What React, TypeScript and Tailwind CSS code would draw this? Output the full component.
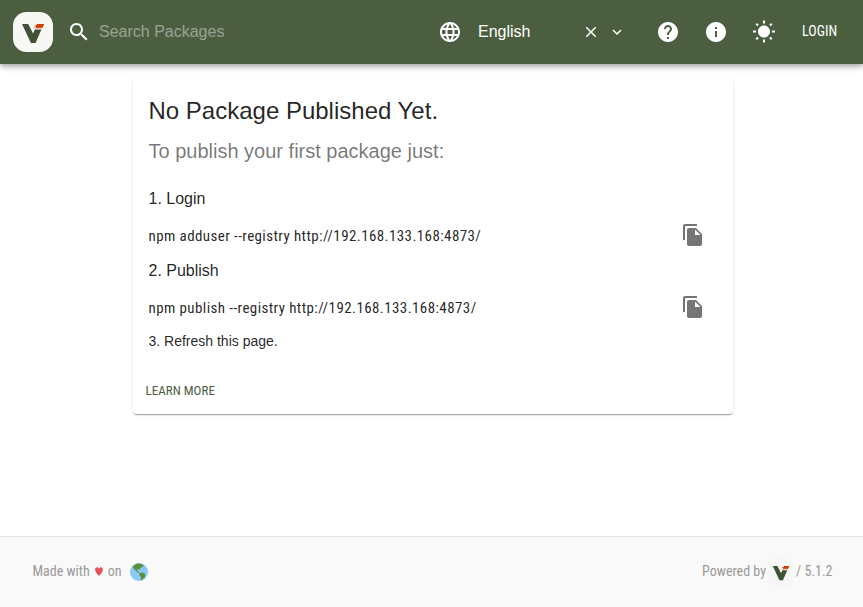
import React from 'react';

const sans = "font-['Liberation_Sans',Arial,sans-serif]";
const cond = "font-['Roboto_Condensed',Roboto,sans-serif] [font-stretch:75%]";

function Icon({ d, className = 'size-6' }: { d: string; className?: string }) {
  return (
    <svg viewBox="0 0 24 24" fill="currentColor" className={`shrink-0 ${className}`}>
      <path d={d} />
    </svg>
  );
}

const paths = {
  search:
    'M15.5 14h-.79l-.28-.27C15.41 12.59 16 11.11 16 9.5 16 5.91 13.09 3 9.5 3S3 5.91 3 9.5 5.91 16 9.5 16c1.61 0 3.09-.59 4.23-1.57l.27.28v.79l5 4.99L20.49 19l-4.99-5zm-6 0C7.01 14 5 11.99 5 9.5S7.01 5 9.5 5 14 7.01 14 9.5 11.99 14 9.5 14z',
  language:
    'M11.99 2C6.47 2 2 6.48 2 12s4.47 10 9.99 10C17.52 22 22 17.52 22 12S17.52 2 11.99 2zm6.93 6h-2.95c-.32-1.25-.78-2.45-1.38-3.56 1.84.63 3.37 1.91 4.33 3.56zM12 4.04c.83 1.2 1.48 2.53 1.91 3.96h-3.82c.43-1.43 1.08-2.76 1.91-3.96zM4.26 14C4.1 13.36 4 12.69 4 12s.1-1.36.26-2h3.38c-.08.66-.14 1.32-.14 2s.06 1.34.14 2H4.26zm.82 2h2.95c.32 1.25.78 2.45 1.38 3.56-1.84-.63-3.37-1.9-4.33-3.56zm2.95-8H5.08c.96-1.66 2.49-2.93 4.33-3.56C8.81 5.55 8.35 6.75 8.03 8zM12 19.96c-.83-1.2-1.48-2.53-1.91-3.96h3.82c-.43 1.43-1.08 2.76-1.91 3.96zM14.34 14H9.66c-.09-.66-.16-1.32-.16-2s.07-1.35.16-2h4.68c.09.65.16 1.32.16 2s-.07 1.34-.16 2zm.25 5.56c.6-1.11 1.06-2.31 1.38-3.56h2.95c-.96 1.65-2.49 2.93-4.33 3.56zM16.36 14c.08-.66.14-1.32.14-2s-.06-1.34-.14-2h3.38c.16.64.26 1.31.26 2s-.1 1.36-.26 2h-3.38z',
  close:
    'M19 6.41 17.59 5 12 10.59 6.41 5 5 6.41 10.59 12 5 17.59 6.41 19 12 13.41 17.59 19 19 17.59 13.41 12z',
  chevron: 'M16.59 8.59 12 13.17 7.41 8.59 6 10l6 6 6-6z',
  help: 'M12 2C6.48 2 2 6.48 2 12s4.48 10 10 10 10-4.48 10-10S17.52 2 12 2zm1 17h-2v-2h2v2zm2.07-7.75-.9.92C13.45 12.9 13 13.5 13 15h-2v-.5c0-1.1.45-2.1 1.17-2.83l1.24-1.26c.37-.36.59-.86.59-1.41 0-1.1-.9-2-2-2s-2 .9-2 2H8c0-2.21 1.79-4 4-4s4 1.79 4 4c0 .88-.36 1.68-.93 2.25z',
  info: 'M12 2C6.48 2 2 6.48 2 12s4.48 10 10 10 10-4.48 10-10S17.52 2 12 2zm1 15h-2v-6h2v6zm0-8h-2V7h2v2z',
  sun: 'm6.76 4.84-1.8-1.79-1.41 1.41 1.79 1.79 1.42-1.41zM4 10.5H1v2h3v-2zm9-9.95h-2V3.5h2V.55zm7.45 3.91-1.41-1.41-1.79 1.79 1.41 1.41 1.79-1.79zm-3.21 13.7 1.79 1.8 1.41-1.41-1.8-1.79-1.4 1.4zM20 10.5v2h3v-2h-3zm-8-5c-3.31 0-6 2.69-6 6s2.69 6 6 6 6-2.69 6-6-2.69-6-6-6zm-1 16.95h2V19.5h-2v2.95zm-7.45-3.91 1.41 1.41 1.79-1.8-1.41-1.41-1.79 1.8z',
  copy: 'M16 1H4c-1.1 0-2 .9-2 2v14h2V3h12V1zm-1 4 6 6v10c0 1.1-.9 2-2 2H7.99C6.89 23 6 22.1 6 21l.01-14c0-1.1.89-2 1.99-2h7zm-1 7h5.5L14 6.5V12z',
};

function Logo({ className }: { className: string }) {
  return (
    <svg viewBox="0 0 40 40" className={`shrink-0 ${className}`}>
      <rect width="40" height="40" rx="13.5" fill="#f7f8f6" />
      <path d="M9 12h6.200l4.900 9.600 1.700-4h6.600L22.600 31h-4.700z" fill="#405236" />
      <path d="M23.800 12H31.200l-1.900 4h-6.800l.6-1.400h-1.800l.5-1h1.500z" fill="#cd4000" />
      <path d="M20.500 15.800h8.800l-.4.800h-8.600z" fill="#e59a78" />
    </svg>
  );
}

function Command({ children }: { children: React.ReactNode }) {
  return (
    <div className="flex h-10 items-center justify-between pr-3">
      <span className={`${cond} pt-0.5 text-[15px] leading-6 tracking-[0.41px] text-black/87`}>{children}</span>
      <Icon d={paths.copy} className="size-6 text-[#757575]" />
    </div>
  );
}

function Header() {
  return (
    <header className="relative flex h-16 shrink-0 items-center bg-[#4b5e40] text-white shadow-[0_2px_4px_-1px_rgba(0,0,0,0.2),0_4px_5px_0_rgba(0,0,0,0.14),0_1px_10px_0_rgba(0,0,0,0.12)]">
      <Logo className="ml-[13px] size-10" />
      <Icon d={paths.search} className="ml-[14px] size-6" />
      <span className={`${sans} ml-2 w-[339px] text-base text-white/42`}>Search Packages</span>
      <Icon d={paths.language} className="size-6" />
      <span className={`${sans} ml-4 w-[104px] text-base`}>English</span>
      <Icon d={paths.close} className="size-[18px]" />
      <Icon d={paths.chevron} className="ml-2 size-[18px]" />
      <Icon d={paths.help} className="ml-[30px] size-6" />
      <Icon d={paths.info} className="ml-6 size-6" />
      <Icon d={paths.sun} className="ml-6 size-6" />
      <span className={`${cond} ml-[26px] pb-0.5 text-[14px] leading-5 font-[450]`}>LOGIN</span>
    </header>
  );
}

function Footer() {
  return (
    <footer className={`${cond} flex h-[71px] shrink-0 items-center justify-between border-t border-[#e3e3e3] bg-[#f9f9f9] pr-[30.5px] pb-px pl-[32.5px] text-[14px] text-[#999]`}>
      <div className="flex items-center">
        <span>Made with</span>
        <svg viewBox="0 0 8 9" className="mx-[5px] h-[9px] w-2 fill-[#e25555]">
          <path d="M4 9C2.800 7.200.2 5.200.1 2.700.1 1.200 1 .3 2.100.3 3 .3 3.700.9 4 1.800 4.300.9 5 .3 5.900.3 7 .3 7.900 1.200 7.900 2.700 7.800 5.200 5.200 7.200 4 9z" />
        </svg>
        <span>on</span>
        <svg viewBox="0 0 18 18" className="ml-2 size-[18px]">
          <circle cx="9" cy="9" r="9" fill="#88c9f9" />
          <path d="M2.800 4 4 2.500 6.500.8l3.500-.2 1.500 1 1.900.2.2 1-1.600 1.600-1.400.4-1.200 2.200-1-.8-1.500.4.3 1.500 1.700.6 1 1.300-1.600-.3-2.300-1.500L4.500 6l-1.200-.5z" fill="#5c913b" />
          <path d="m9.500 10.200 2-.8 1.700.3 2.200 1.600-.6 2.600-1.600 2.200-1.700 1.200-.8-.5.200-2.600-1.600-2z" fill="#5c913b" />
        </svg>
      </div>
      <div className="flex items-center">
        <span>Powered by</span>
        <Logo className="size-[30px]" />
        <span>/ 5.1.2</span>
      </div>
    </footer>
  );
}

export default function App() {
  return (
    <div className="flex h-[607px] flex-col bg-white">
      <Header />
      <main className="flex-1 pt-[15px] pl-[3px]">
        <section className={`${sans} mx-auto h-[335px] w-[600px] rounded bg-white pt-4 pr-4 pl-[15.5px] text-black/87 shadow-[0_2px_1px_-1px_rgba(0,0,0,0.2),0_1px_1px_0_rgba(0,0,0,0.14),0_1px_3px_0_rgba(0,0,0,0.12)]`}>
          <h1 className="text-2xl leading-8">No Package Published Yet.</h1>
          <p className="mt-2 text-xl leading-8 text-black/54">To publish your first package just:</p>
          <p className="mt-5 mb-1 text-base leading-6">1. Login</p>
          <Command>npm adduser --registry http://192.168.133.168:4873/</Command>
          <p className="text-base leading-8">2. Publish</p>
          <Command>npm publish --registry http://192.168.133.168:4873/</Command>
          <p className="pt-px text-sm leading-[26px]">3. Refresh this page.</p>
          <p className={`${cond} mt-[25px] -ml-[3px] text-[13px] leading-6 tracking-[0.03px] text-[#4b5e40]`}>LEARN MORE</p>
        </section>
      </main>
      <Footer />
    </div>
  );
}
